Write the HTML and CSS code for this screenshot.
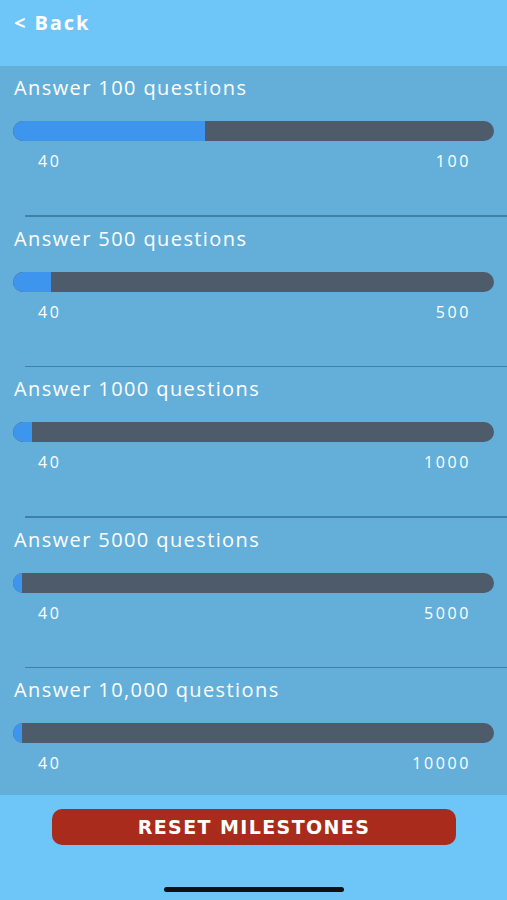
FILE: index.html
```html
<!DOCTYPE html>
<html>
<head>
<meta charset="utf-8">
<link rel="stylesheet" href="styles.css">
</head>
<body>
<div class="app">
  <header class="topbar">
    <span class="back">&lt; Back</span>
  </header>
  <main class="list">
    <section class="milestone">
      <div class="title">Answer 100 questions</div>
      <div class="track"><div class="fill" style="width:40%"></div></div>
      <div class="labels"><span>40</span><span>100</span></div>
    </section>
    <hr class="sep">
    <section class="milestone">
      <div class="title">Answer 500 questions</div>
      <div class="track"><div class="fill" style="width:8%"></div></div>
      <div class="labels"><span>40</span><span>500</span></div>
    </section>
    <hr class="sep">
    <section class="milestone">
      <div class="title">Answer 1000 questions</div>
      <div class="track"><div class="fill" style="width:4%"></div></div>
      <div class="labels"><span>40</span><span>1000</span></div>
    </section>
    <hr class="sep">
    <section class="milestone">
      <div class="title">Answer 5000 questions</div>
      <div class="track"><div class="fill" style="width:0.8%"></div></div>
      <div class="labels"><span>40</span><span>5000</span></div>
    </section>
    <hr class="sep">
    <section class="milestone last">
      <div class="title">Answer 10,000 questions</div>
      <div class="track"><div class="fill" style="width:0.4%"></div></div>
      <div class="labels"><span>40</span><span>10000</span></div>
    </section>
  </main>
  <footer class="bottom">
    <button class="reset">RESET MILESTONES</button>
    <div class="home-indicator"></div>
  </footer>
</div>
</body>
</html>
```
FILE: styles.css
```css
* { box-sizing: border-box; }
html, body { margin: 0; padding: 0; }
body {
  font-family: "Open Sans", "Liberation Sans", sans-serif;
  color: #fff;
  background: #6ec6f8;
}
.app {
  width: 507px;
  height: 900px;
  display: flex;
  flex-direction: column;
}
.topbar {
  height: 66px;
  flex: none;
  background: #6ec6f8;
  padding: 10px 14px 0;
}
.back {
  font-weight: 700;
  font-size: 20px;
  line-height: 26px;
  letter-spacing: 1.9px;
}
.list {
  background: #64afda;
  flex: none;
}
.milestone {
  height: 149px;
  padding-top: 10px;
  display: flex;
  flex-direction: column;
}
.milestone.last { height: 127px; }
.sep {
  margin: 0 0 0 25px;
  border: none;
  height: 1.5px;
  background: #3f80a8;
}
.title {
  font-size: 20px;
  line-height: 24px;
  padding-left: 14px;
  letter-spacing: 1.4px;
}
.track {
  margin: 21px 13px 0;
  height: 20px;
  border-radius: 10px;
  background: #4d5b6b;
  overflow: hidden;
  display: flex;
  flex: none;
}
.fill {
  min-width: 9px;
  height: 100%;
  background: #3e95ee;
  border-radius: 10px 0 0 10px;
}
.labels {
  display: flex;
  justify-content: space-between;
  padding: 0 36px 0 38px;
  margin-top: 9px;
  font-size: 16px;
  line-height: 22px;
  letter-spacing: 2.6px;
}
.bottom {
  flex: 1;
  background: #6ec6f8;
  display: flex;
  flex-direction: column;
  align-items: center;
  padding-top: 14px;
}
.reset {
  width: 404px;
  height: 36px;
  border: none;
  border-radius: 10px;
  background: #a82b1b;
  color: #fff;
  font-family: "DejaVu Sans", "Liberation Sans", sans-serif;
  font-weight: 700;
  font-size: 19px;
  letter-spacing: 1.4px;
  padding: 0 0 0 1px;
}
.home-indicator {
  width: 180px;
  height: 5px;
  border-radius: 3px;
  background: #111;
  margin-top: 42px;
}
```
